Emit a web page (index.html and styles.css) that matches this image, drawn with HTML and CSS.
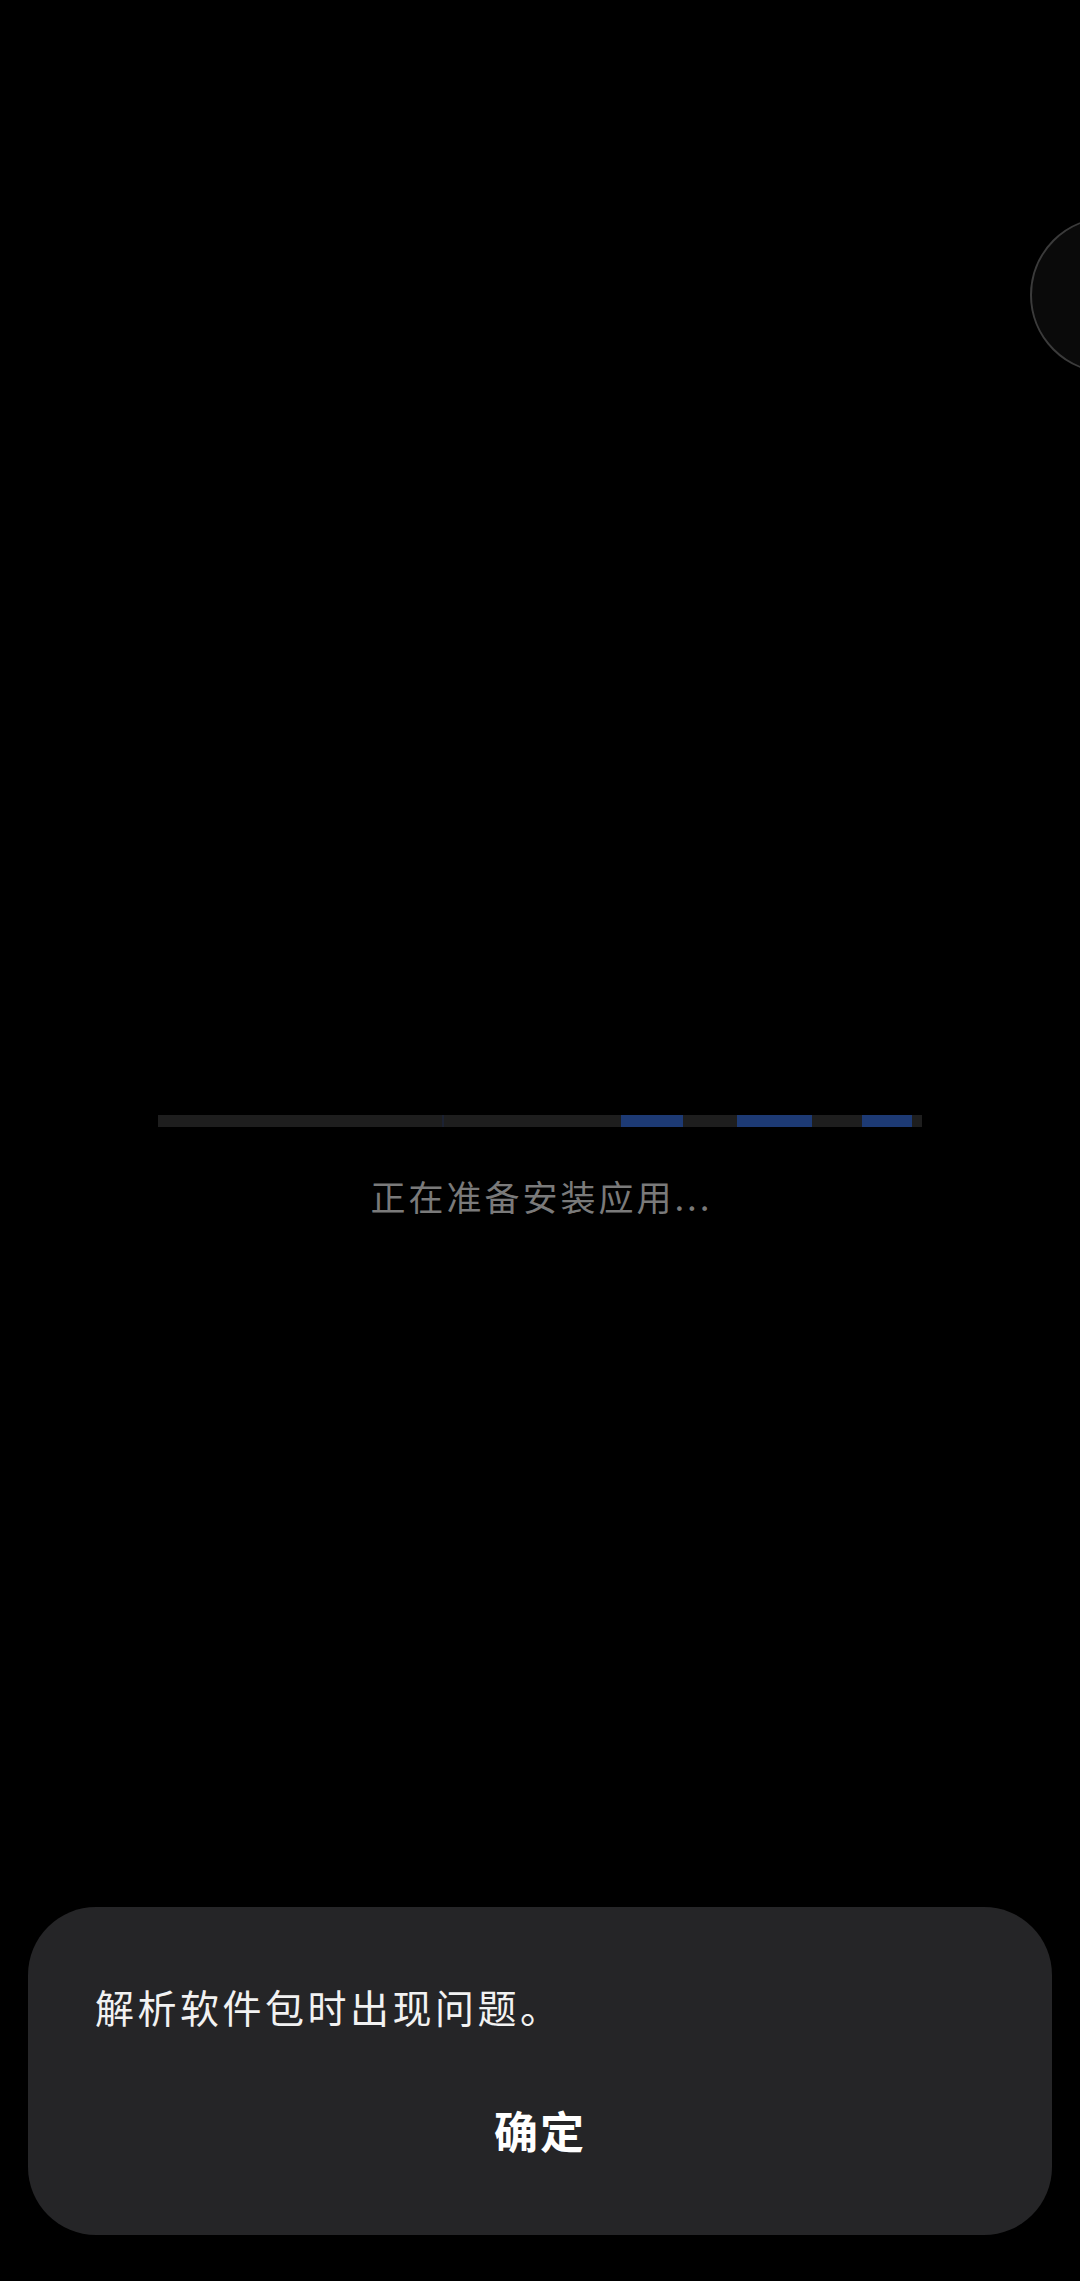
FILE: index.html
```html
<!DOCTYPE html>
<html lang="zh-CN">
<head>
<meta charset="utf-8">
<title>安装</title>
<link rel="stylesheet" href="styles.css">
</head>
<body>
<div class="screen">
  <div class="float-ball"></div>
  <div class="progress-area">
    <div class="progress-track"></div>
    <div class="progress-label">正在准备安装应用...</div>
  </div>
  <div class="dialog">
    <div class="dialog-message">解析软件包时出现问题。</div>
    <div class="dialog-button">确定</div>
  </div>
</div>
</body>
</html>
```

FILE: styles.css
```css
html, body {
  margin: 0;
  padding: 0;
  background: #000;
}

.screen {
  position: relative;
  width: 1080px;
  height: 2281px;
  overflow: hidden;
  display: flex;
  flex-direction: column;
  background: #000;
  font-family: "Noto Sans CJK SC", "Noto Sans", sans-serif;
}

.float-ball {
  position: absolute;
  left: 1030px;
  top: 217px;
  width: 152px;
  height: 152px;
  border-radius: 50%;
  border: 2px solid #3b3b3b;
  background: #0a0a0a;
}

.progress-area {
  padding-top: 1115px;
  display: flex;
  flex-direction: column;
}

.progress-track {
  margin-left: 158px;
  width: 764px;
  height: 12px;
  background: linear-gradient(to right,
    #1e1e1e 0px, #1e1e1e 284px,
    #1c2233 284px, #1c2233 286px,
    #1e1e1e 286px, #1e1e1e 463px,
    #1d3a74 463px, #1d3a74 525px,
    #1e1e1e 525px, #1e1e1e 579px,
    #1d3a74 579px, #1d3a74 654px,
    #1e1e1e 654px, #1e1e1e 704px,
    #1d3a74 704px, #1d3a74 754px,
    #1e1e1e 754px, #1e1e1e 764px);
}

.progress-label {
  margin-top: 45px;
  height: 48px;
  line-height: 48px;
  text-align: center;
  font-size: 35px;
  letter-spacing: 3px;
  color: #7a7a7a;
  padding-left: 3px;
}

.dialog {
  margin: auto 28px 46px 28px;
  height: 328px;
  box-sizing: border-box;
  background: #252527;
  border-radius: 68px;
  padding: 71px 0 0 67px;
  display: flex;
  flex-direction: column;
}

.dialog-message {
  height: 56px;
  line-height: 56px;
  font-size: 39px;
  letter-spacing: 3.5px;
  color: #f2f2f2;
}

.dialog-button {
  margin-top: 66px;
  margin-left: -67px;
  height: 60px;
  line-height: 60px;
  text-align: center;
  font-size: 44px;
  font-weight: 700;
  letter-spacing: 2px;
  color: #ffffff;
}
```
